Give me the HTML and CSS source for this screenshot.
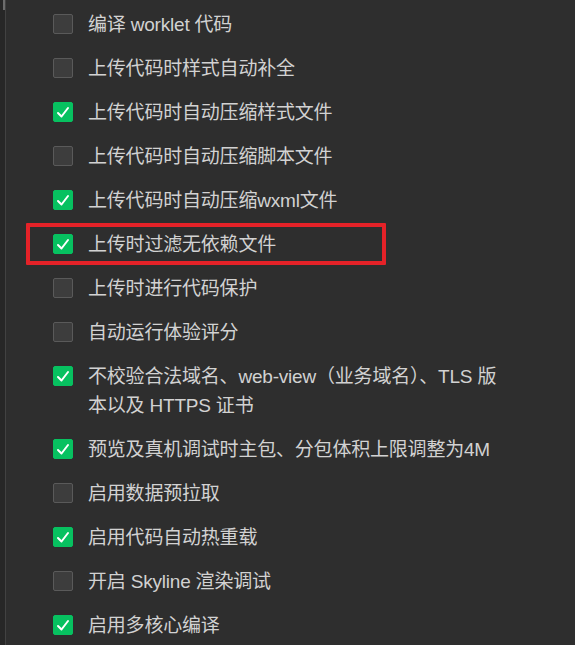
FILE: index.html
```html
<!DOCTYPE html>
<html lang="zh-CN">
<head>
  <meta charset="UTF-8">
  <title>本地设置</title>
  <link rel="stylesheet" href="styles.css">
</head>
<body>
  <div class="edge"><div class="thumb"></div></div>

  <div class="options">
    <div class="row"><span class="box"></span><span class="label">编译 worklet 代码</span></div>
    <div class="row"><span class="box"></span><span class="label">上传代码时样式自动补全</span></div>
    <div class="row"><span class="box on"></span><span class="label">上传代码时自动压缩样式文件</span></div>
    <div class="row"><span class="box"></span><span class="label">上传代码时自动压缩脚本文件</span></div>
    <div class="row"><span class="box on"></span><span class="label">上传代码时自动压缩wxml文件</span></div>
    <div class="row marked"><span class="box on"></span><span class="label">上传时过滤无依赖文件</span></div>
    <div class="row"><span class="box"></span><span class="label">上传时进行代码保护</span></div>
    <div class="row"><span class="box"></span><span class="label">自动运行体验评分</span></div>
    <div class="row"><span class="box on"></span><span class="label">不校验合法域名、web-view（业务域名）、TLS 版<br>本以及 HTTPS 证书</span></div>
    <div class="row"><span class="box on"></span><span class="label">预览及真机调试时主包、分包体积上限调整为4M</span></div>
    <div class="row"><span class="box"></span><span class="label">启用数据预拉取</span></div>
    <div class="row"><span class="box on"></span><span class="label">启用代码自动热重载</span></div>
    <div class="row"><span class="box"></span><span class="label">开启 Skyline 渲染调试</span></div>
    <div class="row"><span class="box on"></span><span class="label">启用多核心编译</span></div>
  </div>
</body>
</html>
```

FILE: styles.css
```css
html, body {
  height: 100%;
}
body {
  margin: 0;
  background: #2e2e2e;
  color: #d2d2d2;
  font-family: "Liberation Sans", "Noto Sans CJK SC", sans-serif;
  font-size: 19px;
  overflow: hidden;
  display: flex;
}
.edge {
  width: 5px;
  background: #272727;
  border-right: 1px solid #424242;
  flex-shrink: 0;
}
.thumb {
  width: 2px;
  height: 10px;
  margin-left: 3px;
  background: #6c6c6c;
}
.options {
  width: 480px;
  padding: 3px 0 0 47px;
}
.row {
  position: relative;
  display: flex;
  align-items: flex-start;
  padding: 7px 0 8px;
  line-height: 29px;
  white-space: nowrap;
}
.label {
  letter-spacing: -0.2px;
}
.box {
  flex-shrink: 0;
  width: 18px;
  height: 18px;
  margin-top: 4px;
  margin-right: 15px;
  border: 1px solid #5a5a5a;
  border-radius: 2px;
  background: #3d3d3d;
}
.box.on {
  border-color: #07c160;
  background: #07c160 url("data:image/svg+xml,%3Csvg xmlns='http://www.w3.org/2000/svg' viewBox='0 0 18 18'%3E%3Cpath d='M4 10l3.5 3.5L14 5' fill='none' stroke='%23fff' stroke-width='2' stroke-linecap='round' stroke-linejoin='round'/%3E%3C/svg%3E") center / 18px 18px no-repeat;
}
.marked::after {
  content: "";
  position: absolute;
  left: -27px;
  top: 0;
  width: 352px;
  height: 34px;
  border: 4px solid #e52228;
  border-radius: 1px;
}
```
